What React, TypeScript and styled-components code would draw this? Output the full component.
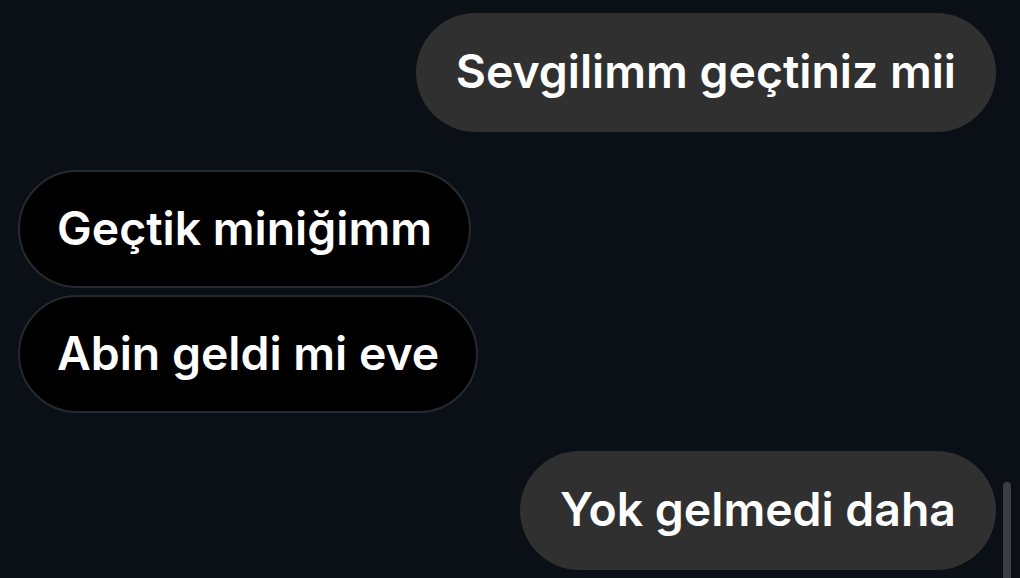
import React from "react";
import styled, { createGlobalStyle } from "styled-components";

const Global = createGlobalStyle`
  html, body {
    margin: 0;
    padding: 0;
    background: #0b0f16;
    width: 1020px;
    height: 578px;
    overflow: hidden;
  }
  #root { height: 578px; }
`;

const Screen = styled.div`
  position: relative;
  width: 1020px;
  height: 578px;
  background: #0b0f16;
  overflow: hidden;
  font-family: Inter, "Liberation Sans", sans-serif;
`;

const Thread = styled.div`
  display: flex;
  flex-direction: column;
  padding: 13px 24px 0 18px;
`;

const Group = styled.div<{ $gapTop: number }>`
  display: flex;
  flex-direction: column;
  gap: 7px;
  margin-top: ${(p) => p.$gapTop}px;
`;

const Bubble = styled.div<{ $out?: boolean }>`
  align-self: ${(p) => (p.$out ? "flex-end" : "flex-start")};
  box-sizing: border-box;
  height: ${(p) => (p.$out ? 119 : 118)}px;
  display: flex;
  align-items: center;
  padding: 0 ${(p) => (p.$out ? 40 : 37)}px 3px;
  border-radius: 60px;
  background: ${(p) => (p.$out ? "#303030" : "#000000")};
  border: ${(p) => (p.$out ? "none" : "2px solid #26292e")};
  color: #ffffff;
  font-size: 46.4px;
  font-weight: 600;
  letter-spacing: 0;
  white-space: nowrap;
`;

const ScrollThumb = styled.div`
  position: absolute;
  right: 9px;
  top: 482px;
  width: 8px;
  height: 110px;
  border-radius: 4px;
  background: #3a3d44;
`;

export default function App() {
  return (
    <>
      <Global />
      <Screen>
        <Thread>
          <Group $gapTop={0}>
            <Bubble $out>Sevgilimm geçtiniz mii</Bubble>
          </Group>
          <Group $gapTop={38}>
            <Bubble>Geçtik miniğimm</Bubble>
            <Bubble>Abin geldi mi eve</Bubble>
          </Group>
          <Group $gapTop={38}>
            <Bubble $out>Yok gelmedi daha</Bubble>
          </Group>
        </Thread>
        <ScrollThumb />
      </Screen>
    </>
  );
}
